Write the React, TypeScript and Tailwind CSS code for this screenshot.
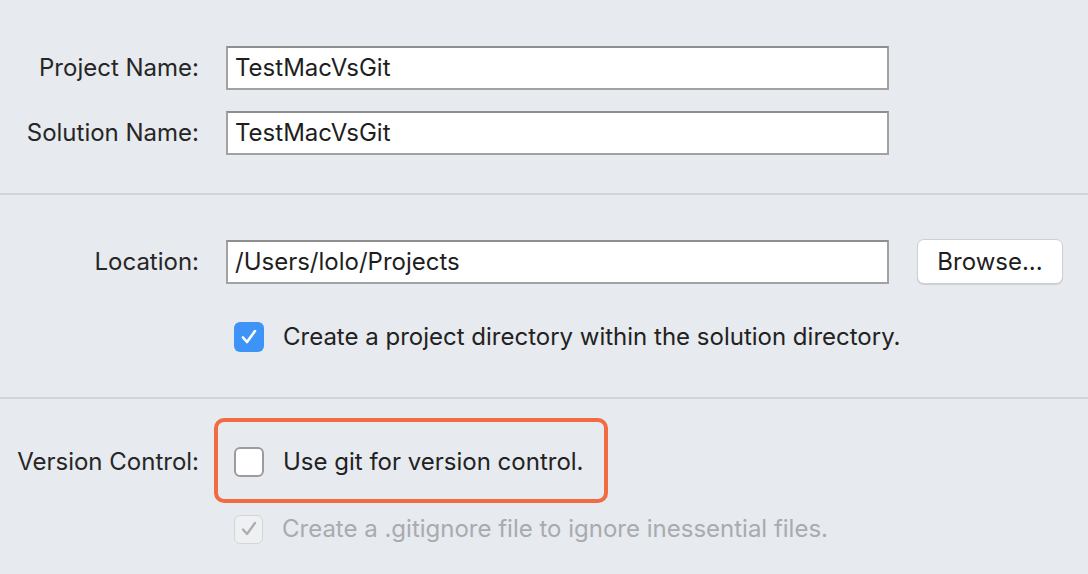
import React from 'react';

const font = { fontFamily: 'Inter, "Noto Sans", sans-serif' };

function TextField({ value }: { value: string }) {
  return (
    <div className="flex h-[44px] w-[663px] items-center border-2 border-[#a2a2a2] border-t-[#8e8e8e] bg-white pl-[7px] text-[24px] leading-none text-[#1e1e1e]">
      {value}
    </div>
  );
}

function Check({ state }: { state: 'on' | 'off' | 'disabled' }) {
  if (state === 'on') {
    return (
      <span className="flex h-[30px] w-[30px] shrink-0 items-center justify-center rounded-[6px] bg-[#3d94f6]">
        <svg width="20" height="20" viewBox="0 0 20 20" fill="none">
          <path d="M4 10.5l4 4.5 8-11" stroke="white" strokeWidth="2.6" strokeLinecap="round" strokeLinejoin="round" />
        </svg>
      </span>
    );
  }
  if (state === 'disabled') {
    return (
      <span className="flex h-[29px] w-[29px] shrink-0 items-center justify-center rounded-[6px] border border-[#d3d5d8] bg-[#eef0f2]">
        <svg width="20" height="20" viewBox="0 0 20 20" fill="none">
          <path d="M4 10.5l4 4.5 8-11" stroke="#a9acb0" strokeWidth="2.2" strokeLinecap="round" strokeLinejoin="round" />
        </svg>
      </span>
    );
  }
  return <span className="block h-[30px] w-[30px] shrink-0 rounded-[6px] border-2 border-[#9c9c9c] bg-white" />;
}

function Row({ label, children }: { label?: string; children: React.ReactNode }) {
  return (
    <div className="flex items-center">
      <div className="w-[199px] shrink-0 text-right text-[24px] leading-none text-[#262626]">{label}</div>
      <div className="ml-[27px] flex items-center">{children}</div>
    </div>
  );
}

export default function App() {
  return (
    <div className="h-[574px] w-[1088px] overflow-hidden bg-[#e7eaee] leading-none" style={font}>
      {/* names */}
      <div className="flex flex-col gap-[21px] pb-[38px] pt-[46px]">
        <Row label="Project Name:">
          <TextField value="TestMacVsGit" />
        </Row>
        <Row label="Solution Name:">
          <TextField value="TestMacVsGit" />
        </Row>
      </div>
      <div className="h-[2px] bg-[#d1d4d8]" />

      {/* location */}
      <div className="flex flex-col pb-[45px] pt-[44px]">
        <Row label="Location:">
          <TextField value="/Users/lolo/Projects" />
          <button className="ml-[28px] h-[45px] w-[146px] rounded-[7px] border border-[#cfd0d2] bg-white text-[24px] text-[#1e1e1e] shadow-[0_1px_1px_rgba(0,0,0,0.12)]">
            Browse...
          </button>
        </Row>
        <div className="ml-[234px] mt-[38px] flex h-[30px] items-center gap-[19px]">
          <Check state="on" />
          <span className="text-[24px] text-[#222]">Create a project directory within the solution directory.</span>
        </div>
      </div>
      <div className="h-[2px] bg-[#d1d4d8]" />

      {/* version control */}
      <div className="flex flex-col pt-[48px]">
        <div className="flex h-[30px] items-center">
          <div className="w-[199px] shrink-0 text-right text-[24px] text-[#262626]">Version Control:</div>
          <div className="relative ml-[35px] flex items-center gap-[19px]">
            <span className="pointer-events-none absolute left-[-20px] top-[-29px] h-[85px] w-[394px] rounded-[10px] border-[4px] border-[#f26b43]" />
            <Check state="off" />
            <span className="text-[24px] text-[#222]">Use git for version control.</span>
          </div>
        </div>
        <div className="ml-[234px] mt-[37px] flex h-[30px] items-center gap-[19px]">
          <Check state="disabled" />
          <span className="text-[24px] text-[#a8abaf]">Create a .gitignore file to ignore inessential files.</span>
        </div>
      </div>
    </div>
  );
}
